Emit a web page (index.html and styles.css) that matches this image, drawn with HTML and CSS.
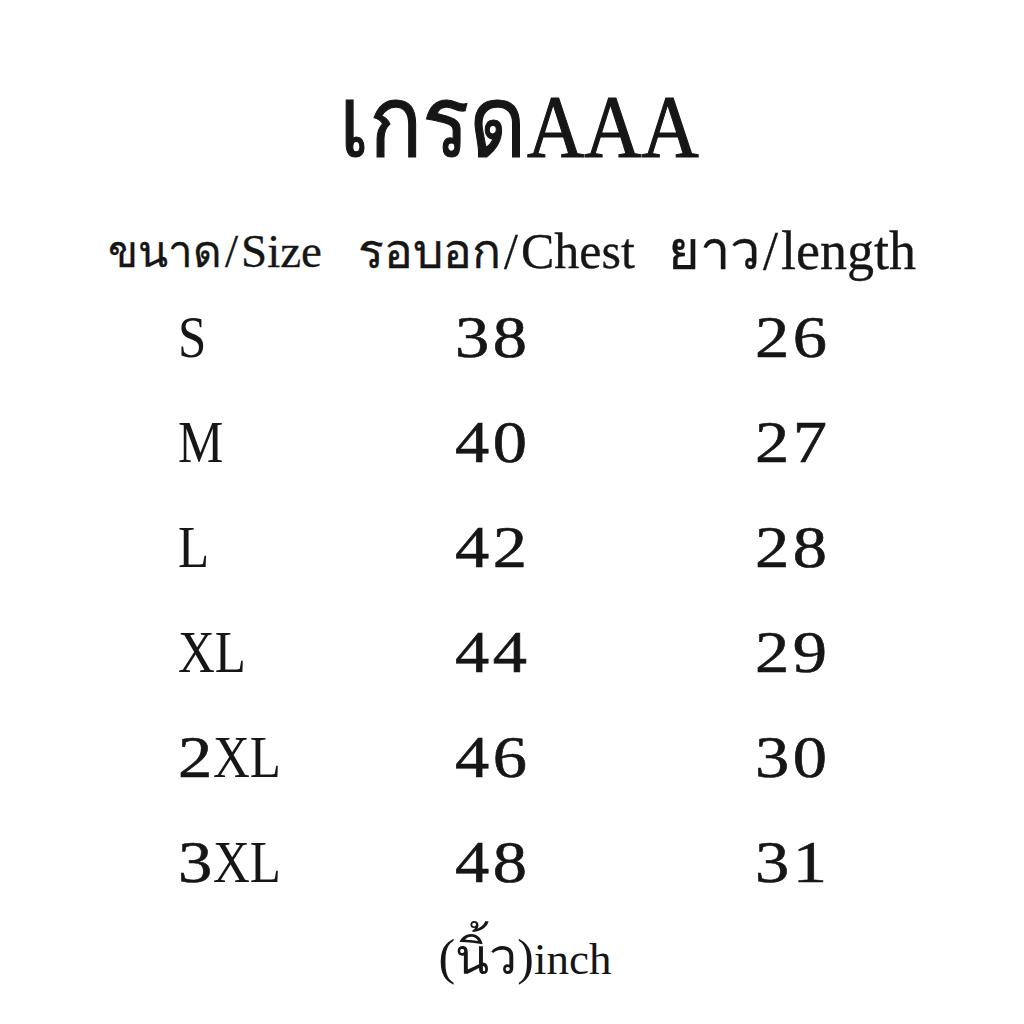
FILE: index.html
```html
<!DOCTYPE html>
<html lang="th">
<head>
<meta charset="utf-8">
<link rel="stylesheet" href="styles.css">
</head>
<body>
<div class="page">
  <h1 class="title"><span class="title-in"><span class="th-title">เกรด</span>AAA</span></h1>
  <div class="head">
    <span class="h h-size"><span class="th">ขนาด</span><span class="sl">/</span>Size</span>
    <span class="h h-chest"><span class="th">รอบอก</span><span class="sl">/</span>Chest</span>
    <span class="h h-len"><span class="th">ยาว</span><span class="sl">/</span>length</span>
  </div>
  <div class="table">
    <div class="row"><span class="size"><span class="lt">S</span></span><span class="num">38</span><span class="num">26</span></div>
    <div class="row"><span class="size"><span class="lt">M</span></span><span class="num">40</span><span class="num">27</span></div>
    <div class="row"><span class="size"><span class="lt">L</span></span><span class="num">42</span><span class="num">28</span></div>
    <div class="row"><span class="size"><span class="lt">XL</span></span><span class="num">44</span><span class="num">29</span></div>
    <div class="row"><span class="size"><span class="dg">2</span><span class="lt">XL</span></span><span class="num">46</span><span class="num">30</span></div>
    <div class="row"><span class="size"><span class="dg">3</span><span class="lt">XL</span></span><span class="num">48</span><span class="num">31</span></div>
  </div>
  <div class="foot"><span class="th-f">(นิ้ว)</span>inch</div>
</div>
</body>
</html>
```
FILE: styles.css
```css
html, body {
  margin: 0;
  padding: 0;
  background: #ffffff;
}
.page {
  width: 1024px;
  height: 1024px;
  box-sizing: border-box;
  padding-top: 73px;
  color: #161616;
  font-family: "Liberation Serif", serif;
  overflow: hidden;
}
.title {
  margin: 0;
  text-align: center;
  font-size: 88px;
  font-weight: normal;
  line-height: 100px;
  height: 100px;
  padding-left: 14px;
}
.title-in {
  display: inline-block;
  transform: scaleX(0.9);
  -webkit-text-stroke: 1.2px #161616;
}
.th-title {
  font-size: 98px;
}
.head {
  display: grid;
  grid-template-columns: 250px 310px auto;
  margin-top: 48px;
  padding-left: 108px;
  line-height: 60px;
  height: 60px;
  white-space: nowrap;
  -webkit-text-stroke: 0.3px #161616;
}
.sl {
  margin: 0 3px;
}
.h-size {
  font-size: 47px;
}
.h-size .th {
  font-size: 44px;
}
.h-chest {
  font-size: 50px;
}
.h-chest .th {
  font-size: 48px;
}
.h-len {
  font-size: 54px;
}
.h-len .th {
  font-size: 54px;
}
.table {
  margin-top: 4px;
  padding-left: 178px;
}
.row {
  display: grid;
  grid-template-columns: 277px 300px 200px;
  height: 105px;
  line-height: 105px;
  font-size: 59px;
}
.size {
  white-space: nowrap;
}
.lt {
  display: inline-block;
  font-size: 60px;
  transform: scaleX(0.85);
  transform-origin: left center;
}
.dg,
.num {
  display: inline-block;
  transform: scaleX(1.16);
  transform-origin: left center;
  -webkit-text-stroke: 0.6px #161616;
  letter-spacing: 3px;
}
.dg {
  letter-spacing: 0;
  margin-right: 5px;
}
.foot {
  margin-top: 12px;
  text-align: center;
  font-size: 45px;
  line-height: 60px;
  padding-left: 26px;
}
.th-f {
  font-size: 50px;
}
```
